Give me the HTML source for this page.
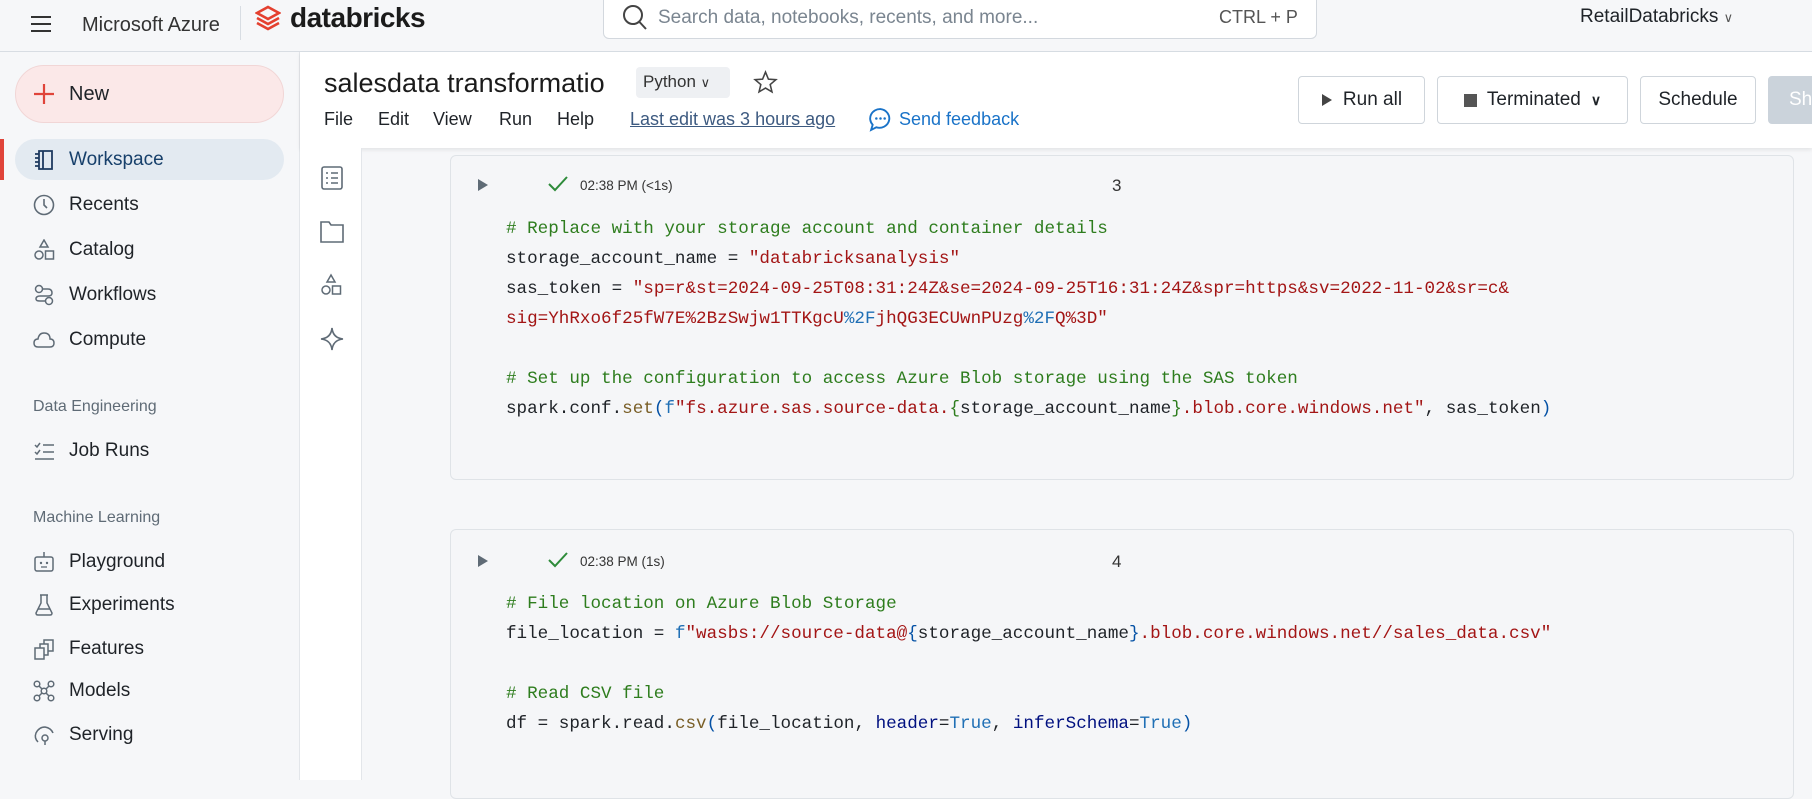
<!DOCTYPE html>
<html><head><meta charset="utf-8">
<style>
*{margin:0;padding:0;box-sizing:border-box}
body{width:1812px;height:780px;overflow:hidden;background:#f6f7f9;font-family:"Liberation Sans",sans-serif;color:#1f2328;position:relative}
.a{position:absolute;white-space:nowrap}
.top{left:0;top:0;width:1812px;height:52px;background:#f6f7f9;border-bottom:1px solid #d8dde3}
.side{left:0;top:52px;width:300px;height:728px;background:#f6f7f9;border-right:1px solid #e3e6ea}
.nav{left:69px;font-size:19px;color:#1f2328;transform:translateY(-50%)}
.ic{left:33px;width:22px;height:22px;transform:translateY(-50%)}
.sec{left:33px;font-size:16px;color:#5f6b76;transform:translateY(-50%)}
.hdr{left:300px;top:52px;width:1512px;height:96px;background:#fff;box-shadow:0 2px 4px rgba(0,0,0,.08)}
.rail{left:300px;top:148px;width:62px;height:632px;background:#fff;border-right:1px solid #e3e6ea}
.btn{top:76px;height:48px;border:1px solid #cfd5db;border-radius:4px;background:#fff;font-size:19px;display:flex;align-items:center;justify-content:center;gap:10px}
.cell{left:450px;width:1344px;background:#f5f6f8;border:1px solid #dfe3e7;border-radius:6px}
.code{font-family:"Liberation Mono",monospace;font-size:17.6px;left:506px;color:#1f2328}
.c{color:#2e7d1e}.s{color:#a31515}.b{color:#0451a5}.fn{color:#795e26}.p{color:#001080}.k{color:#1f6fb5}
.meta{font-size:13.5px;color:#333}
</style></head><body>
<div class="a top"></div>
<svg class="a" style="left:30px;top:14px" width="22" height="20"><path d="M1 3H21M1 10H21M1 17H21" stroke="#333" stroke-width="2"/></svg>
<div class="a" style="left:82px;top:14px;font-size:20px;color:#333">Microsoft Azure</div>
<div class="a" style="left:240px;top:6px;width:1px;height:34px;background:#d8dde3"></div>
<svg class="a" style="left:255px;top:5px" width="26" height="28" viewBox="0 0 26 28"><path d="M13 2L24 8L13 14L2 8Z M2 13L13 19L24 13 M2 18L13 24L24 18" fill="none" stroke="#e4402f" stroke-width="2.6"/></svg>
<div class="a" style="left:290px;top:2px;font-size:28px;font-weight:bold;color:#1b1b1b;letter-spacing:-0.5px">databricks</div>
<div class="a" style="left:603px;top:-2px;width:714px;height:41px;background:#fff;border:1px solid #d3d8de;border-radius:0 0 6px 6px"></div>
<svg class="a" style="left:622px;top:4px" width="26" height="28"><circle cx="11" cy="11" r="9" fill="none" stroke="#444" stroke-width="2"/><path d="M17.5 18L24 25" stroke="#444" stroke-width="2"/></svg>
<div class="a" style="left:658px;top:7px;font-size:19px;color:#7a8590">Search data, notebooks, recents, and more...</div>
<div class="a" style="left:1219px;top:7px;font-size:18px;color:#555">CTRL + P</div>
<div class="a" style="left:1580px;top:6px;font-size:19px;color:#1f2328">RetailDatabricks <span style="font-size:13px;color:#555">&#8744;</span></div>

<div class="a side"></div>
<div class="a" style="left:15px;top:65px;width:269px;height:58px;background:#fbe8e8;border:1px solid #f1d6d6;border-radius:29px"></div>
<svg class="a" style="left:33px;top:83px" width="22" height="22"><path d="M11 1V21M1 11H21" stroke="#e0443a" stroke-width="2.2"/></svg>
<div class="a" style="left:69px;top:83px;font-size:20px">New</div>
<div class="a" style="left:15px;top:139px;width:269px;height:41px;background:#e3eaf1;border-radius:21px"></div>
<div class="a" style="left:0;top:139px;width:4px;height:41px;background:#e0443a"></div>
<svg class="a ic" style="top:160px" viewBox="0 0 22 22"><path d="M6 2H19V20H6Z M2 5H6M2 9H6M2 13H6M2 17H6 M10 2V20" fill="none" stroke="#1e3a5f" stroke-width="1.8"/></svg>
<div class="a nav" style="top:160px;color:#17406b">Workspace</div>
<svg class="a ic" style="top:205px" viewBox="0 0 22 22"><circle cx="11" cy="11" r="9.5" fill="none" stroke="#5f6b76" stroke-width="1.6"/><path d="M11 5V11L14 14" fill="none" stroke="#5f6b76" stroke-width="1.6"/></svg>
<div class="a nav" style="top:205px">Recents</div>
<svg class="a ic" style="top:250px" viewBox="0 0 22 22"><path d="M11 1L15 8H7Z" fill="none" stroke="#5f6b76" stroke-width="1.5"/><circle cx="6" cy="16" r="4" fill="none" stroke="#5f6b76" stroke-width="1.5"/><rect x="12.5" y="12" width="8" height="8" fill="none" stroke="#5f6b76" stroke-width="1.5"/></svg>
<div class="a nav" style="top:250px">Catalog</div>
<svg class="a ic" style="top:295px" viewBox="0 0 22 22"><circle cx="6" cy="5" r="3.5" fill="none" stroke="#5f6b76" stroke-width="1.5"/><circle cx="16" cy="17" r="3.5" fill="none" stroke="#5f6b76" stroke-width="1.5"/><path d="M9 5H15Q19 5 19 9Q19 12 15 12H7Q3 12 3 15Q3 17 7 17H12" fill="none" stroke="#5f6b76" stroke-width="1.5"/></svg>
<div class="a nav" style="top:295px">Workflows</div>
<svg class="a ic" style="top:340px" viewBox="0 0 22 22"><path d="M5 18Q1 18 1 14Q1 10 5 10Q6 4 11 4Q17 4 17 10Q21 10 21 14Q21 18 17 18Z" fill="none" stroke="#5f6b76" stroke-width="1.5"/></svg>
<div class="a nav" style="top:340px">Compute</div>
<div class="a sec" style="top:407px">Data Engineering</div>
<svg class="a ic" style="top:451px" viewBox="0 0 22 22"><path d="M2 5L4 7L7 3M2 12L4 14L7 10M10 5H21M10 12H21M2 19H21" fill="none" stroke="#5f6b76" stroke-width="1.5"/></svg>
<div class="a nav" style="top:451px">Job Runs</div>
<div class="a sec" style="top:518px">Machine Learning</div>
<svg class="a ic" style="top:562px" viewBox="0 0 22 22"><rect x="2" y="6" width="18" height="14" rx="2" fill="none" stroke="#5f6b76" stroke-width="1.5"/><path d="M11 1V6" stroke="#5f6b76" stroke-width="1.5"/><circle cx="8" cy="12" r="1.2" fill="#5f6b76"/><circle cx="14" cy="12" r="1.2" fill="#5f6b76"/><path d="M8 16H14" stroke="#5f6b76" stroke-width="1.3"/></svg>
<div class="a nav" style="top:562px">Playground</div>
<svg class="a ic" style="top:605px" viewBox="0 0 22 22"><path d="M7 1H15M8 1V9L3 19Q3 21 5 21H17Q19 21 19 19L14 9V1" fill="none" stroke="#5f6b76" stroke-width="1.5"/><path d="M5 15H17" stroke="#5f6b76" stroke-width="1.5"/></svg>
<div class="a nav" style="top:605px">Experiments</div>
<svg class="a ic" style="top:649px" viewBox="0 0 22 22"><rect x="2" y="10" width="9" height="11" fill="none" stroke="#5f6b76" stroke-width="1.5"/><path d="M7 10V6H15V17H11M11 6V2H20V13H15" fill="none" stroke="#5f6b76" stroke-width="1.5"/></svg>
<div class="a nav" style="top:649px">Features</div>
<svg class="a ic" style="top:691px" viewBox="0 0 22 22"><circle cx="4" cy="4" r="2.8" fill="none" stroke="#5f6b76" stroke-width="1.5"/><circle cx="18" cy="4" r="2.8" fill="none" stroke="#5f6b76" stroke-width="1.5"/><circle cx="11" cy="11" r="2.8" fill="none" stroke="#5f6b76" stroke-width="1.5"/><circle cx="4" cy="18" r="2.8" fill="none" stroke="#5f6b76" stroke-width="1.5"/><circle cx="18" cy="18" r="2.8" fill="none" stroke="#5f6b76" stroke-width="1.5"/><path d="M6 6L9 9M16 6L13 9M6 16L9 13M16 16L13 13" stroke="#5f6b76" stroke-width="1.5"/></svg>
<div class="a nav" style="top:691px">Models</div>
<svg class="a ic" style="top:735px" viewBox="0 0 22 22"><path d="M5 18Q1 14 3 9Q6 3 12 3Q18 4 20 9" fill="none" stroke="#5f6b76" stroke-width="1.5"/><circle cx="12" cy="14" r="3" fill="none" stroke="#5f6b76" stroke-width="1.5"/><path d="M12 17V21" stroke="#5f6b76" stroke-width="1.5"/></svg>
<div class="a nav" style="top:735px">Serving</div>

<div class="a hdr"></div>
<div class="a" style="left:324px;top:68px;font-size:27px;color:#1b1b1b">salesdata transformatio</div>
<div class="a" style="left:636px;top:67px;width:94px;height:31px;background:#eef0f3;border-radius:4px;font-size:17px;color:#333;padding:5px 0 0 7px">Python <span style="font-size:13px">&#8744;</span></div>
<svg class="a" style="left:753px;top:70px" width="25" height="25" viewBox="0 0 24 24"><path d="M12 2L14.8 8.8L22 9.3L16.5 14L18.2 21L12 17.3L5.8 21L7.5 14L2 9.3L9.2 8.8Z" fill="none" stroke="#444" stroke-width="1.5"/></svg>
<div class="a" style="left:324px;top:109px;font-size:18px;color:#1f2328">File</div>
<div class="a" style="left:378px;top:109px;font-size:18px">Edit</div>
<div class="a" style="left:433px;top:109px;font-size:18px">View</div>
<div class="a" style="left:499px;top:109px;font-size:18px">Run</div>
<div class="a" style="left:557px;top:109px;font-size:18px">Help</div>
<div class="a" style="left:630px;top:109px;font-size:18px;color:#3d5a80;text-decoration:underline">Last edit was 3 hours ago</div>
<svg class="a" style="left:868px;top:107px" width="25" height="25" viewBox="0 0 24 24"><path d="M12 2A9.5 9 0 1 1 8 19.5L3 22L4.5 17A9.5 9 0 0 1 12 2Z" fill="none" stroke="#1a73c8" stroke-width="1.8"/><circle cx="8" cy="11" r="1.2" fill="#1a73c8"/><circle cx="12" cy="11" r="1.2" fill="#1a73c8"/><circle cx="16" cy="11" r="1.2" fill="#1a73c8"/></svg>
<div class="a" style="left:899px;top:109px;font-size:18px;color:#1a73c8">Send feedback</div>
<div class="a btn" style="left:1298px;width:127px"><svg width="12" height="14"><path d="M1 1L11 7L1 13Z" fill="#444"/></svg>Run all</div>
<div class="a btn" style="left:1437px;width:191px"><span style="width:13px;height:13px;background:#555;display:inline-block"></span>Terminated <span style="font-size:14px;font-weight:bold">&#8744;</span></div>
<div class="a btn" style="left:1640px;width:116px">Schedule</div>
<div class="a btn" style="left:1768px;width:80px;background:#cbd3db;border-color:#cbd3db;color:#fff;justify-content:flex-start;padding-left:20px">Share</div>

<div class="a rail"></div>
<svg class="a" style="left:321px;top:166px" width="22" height="24"><rect x="1" y="1" width="20" height="22" rx="2" fill="none" stroke="#5f6b76" stroke-width="1.6"/><path d="M5 7H7M10 7H17M5 12H7M10 12H17M5 17H7M10 17H17" stroke="#5f6b76" stroke-width="1.6"/></svg>
<svg class="a" style="left:320px;top:221px" width="24" height="22"><path d="M1 1H9L11 4H23V21H1Z" fill="none" stroke="#5f6b76" stroke-width="1.6"/></svg>
<svg class="a" style="left:320px;top:273px" width="22" height="24" viewBox="0 0 22 22"><path d="M11 1L15 8H7Z" fill="none" stroke="#5f6b76" stroke-width="1.5"/><circle cx="6" cy="16" r="4" fill="none" stroke="#5f6b76" stroke-width="1.5"/><rect x="12.5" y="12" width="8" height="8" fill="none" stroke="#5f6b76" stroke-width="1.5"/></svg>
<svg class="a" style="left:320px;top:327px" width="24" height="24" viewBox="0 0 24 24"><path d="M12 1Q13 11 23 12Q13 13 12 23Q11 13 1 12Q11 11 12 1Z" fill="none" stroke="#5f6b76" stroke-width="1.6"/></svg>

<div class="a cell" style="top:155px;height:325px"></div>
<svg class="a" style="left:477px;top:178px" width="12" height="14"><path d="M1 1L11 7L1 13Z" fill="#5f6b76"/></svg>
<svg class="a" style="left:548px;top:176px" width="20" height="16"><path d="M1 8L7 14L19 1" fill="none" stroke="#2e8b3a" stroke-width="2"/></svg>
<div class="a meta" style="left:580px;top:178px">02:38 PM (&lt;1s)</div>
<div class="a" style="left:1112px;top:176px;font-size:17px;color:#333">3</div>
<div class="a code c" style="top:219px"># Replace with your storage account and container details</div>
<div class="a code" style="top:249px">storage_account_name = <span class="s">"databricksanalysis"</span></div>
<div class="a code" style="top:279px">sas_token = <span class="s">"sp=r&amp;st=2024-09-25T08:31:24Z&amp;se=2024-09-25T16:31:24Z&amp;spr=https&amp;sv=2022-11-02&amp;sr=c&amp;</span></div>
<div class="a code s" style="top:309px">sig=YhRxo6f25fW7E%2BzSwjw1TTKgcU<span class="k">%2F</span>jhQG3ECUwnPUzg<span class="k">%2F</span>Q%3D"</div>
<div class="a code c" style="top:369px"># Set up the configuration to access Azure Blob storage using the SAS token</div>
<div class="a code" style="top:399px">spark.conf.<span class="fn">set</span><span class="b">(</span><span class="k">f</span><span class="s">"fs.azure.sas.source-data.</span><span class="c">{</span>storage_account_name<span class="c">}</span><span class="s">.blob.core.windows.net"</span>, sas_token<span class="b">)</span></div>

<div class="a cell" style="top:529px;height:270px"></div>
<svg class="a" style="left:477px;top:554px" width="12" height="14"><path d="M1 1L11 7L1 13Z" fill="#5f6b76"/></svg>
<svg class="a" style="left:548px;top:552px" width="20" height="16"><path d="M1 8L7 14L19 1" fill="none" stroke="#2e8b3a" stroke-width="2"/></svg>
<div class="a meta" style="left:580px;top:554px">02:38 PM (1s)</div>
<div class="a" style="left:1112px;top:552px;font-size:17px;color:#333">4</div>
<div class="a code c" style="top:594px"># File location on Azure Blob Storage</div>
<div class="a code" style="top:624px">file_location = <span class="k">f</span><span class="s">"wasbs://source-data@</span><span class="b">{</span>storage_account_name<span class="b">}</span><span class="s">.blob.core.windows.net//sales_data.csv"</span></div>
<div class="a code c" style="top:684px"># Read CSV file</div>
<div class="a code" style="top:714px">df = spark.read.<span class="fn">csv</span><span class="b">(</span>file_location, <span class="p">header</span>=<span class="k">True</span>, <span class="p">inferSchema</span>=<span class="k">True</span><span class="b">)</span></div>
</body></html>
